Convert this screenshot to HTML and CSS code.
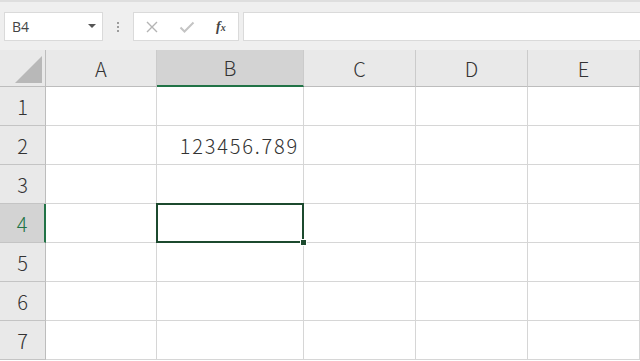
FILE: index.html
```html
<!DOCTYPE html>
<html lang="ja">
<head>
    <meta charset="UTF-8">
    <meta name="viewport" content="width=device-width, initial-scale=1.0">
    <title>Sheet</title>
    <link rel="stylesheet" href="styles.css">
</head>
<body>
    <div class="toolbar">
        <div class="namebox">
            <span>B4</span>
            <span class="caret"></span>
        </div>
        <div class="grip"><i></i><i></i><i></i></div>
        <div class="actions">
            <svg class="icon" width="14" height="14" viewBox="0 0 14 14">
                <path d="M2 2 L12 12 M12 2 L2 12" stroke="#b4b4b4" stroke-width="1.4" fill="none"/>
            </svg>
            <svg class="icon" width="16" height="14" viewBox="0 0 16 14">
                <path d="M1.5 7.5 L5.5 11.5 L14.5 2.5" stroke="#c4c4c4" stroke-width="2" fill="none"/>
            </svg>
            <span class="fx">f<sub>x</sub></span>
        </div>
        <div class="formula"></div>
    </div>

    <div class="sheet">
        <div class="corner"><span class="tri"></span></div>
        <div class="colhead">A</div>
        <div class="colhead active">B</div>
        <div class="colhead">C</div>
        <div class="colhead">D</div>
        <div class="colhead">E</div>

        <div class="rowhead">1</div>
        <div class="cell"></div><div class="cell"></div><div class="cell"></div><div class="cell"></div><div class="cell"></div>

        <div class="rowhead">2</div>
        <div class="cell"></div><div class="cell num">123456.789</div><div class="cell"></div><div class="cell"></div><div class="cell"></div>

        <div class="rowhead">3</div>
        <div class="cell"></div><div class="cell"></div><div class="cell"></div><div class="cell"></div><div class="cell"></div>

        <div class="rowhead active">4</div>
        <div class="cell"></div><div class="cell selected"><span class="handle"></span></div><div class="cell"></div><div class="cell"></div><div class="cell"></div>

        <div class="rowhead">5</div>
        <div class="cell"></div><div class="cell"></div><div class="cell"></div><div class="cell"></div><div class="cell"></div>

        <div class="rowhead">6</div>
        <div class="cell"></div><div class="cell"></div><div class="cell"></div><div class="cell"></div><div class="cell"></div>

        <div class="rowhead">7</div>
        <div class="cell"></div><div class="cell"></div><div class="cell"></div><div class="cell"></div><div class="cell"></div>
    </div>
</body>
</html>
```

FILE: styles.css
```css
body {
    margin: 0;
    width: 640px;
    height: 361px;
    overflow: hidden;
    background: #ffffff;
    font-family: "Noto Sans CJK JP", "Noto Sans", sans-serif;
    font-weight: 300;
    color: #333333;
}
.toolbar {
    height: 50px;
    box-sizing: border-box;
    background: #efefef;
    border-top: 2px solid #dedede;
    padding: 10px 0 0 4px;
    display: flex;
    align-items: flex-start;
}
.namebox {
    width: 99px;
    height: 29px;
    box-sizing: border-box;
    background: #ffffff;
    border: 1px solid #dadada;
    display: flex;
    align-items: center;
    justify-content: space-between;
    padding: 0 6px 0 7px;
    font-family: "Open Sans", sans-serif;
    font-weight: 400;
    font-size: 14px;
    color: #444444;
}
.caret {
    width: 0;
    height: 0;
    border-left: 4px solid transparent;
    border-right: 4px solid transparent;
    border-top: 4px solid #555555;
    margin-bottom: 2px;
}
.grip {
    width: 30px;
    height: 29px;
    display: flex;
    flex-direction: column;
    align-items: center;
    justify-content: center;
    gap: 2px;
}
.grip i {
    width: 2px;
    height: 2px;
    background: #9c9c9c;
}
.actions {
    width: 106px;
    height: 29px;
    box-sizing: border-box;
    background: #ffffff;
    border: 1px solid #dadada;
    display: flex;
    align-items: center;
    padding-left: 11px;
    gap: 20px;
}
.fx {
    font-family: "Liberation Serif", serif;
    font-style: italic;
    font-weight: bold;
    font-size: 14px;
    color: #444444;
    margin-left: 1px;
}
.fx sub {
    font-size: 10px;
    vertical-align: 0;
}
.formula {
    flex: 1;
    height: 29px;
    margin-left: 4px;
    background: #ffffff;
    border: 1px solid #dadada;
    border-right: none;
    box-sizing: border-box;
}
.sheet {
    display: grid;
    grid-template-columns: 46px 111px 147px 112px 112px 112px;
    grid-template-rows: 37px repeat(7, 39px);
    font-size: 20px;
}
.sheet > div {
    box-sizing: border-box;
    border-right: 1px solid #d6d6d6;
    border-bottom: 1px solid #d6d6d6;
}
.corner {
    background: #e9e9e9;
    position: relative;
    border-right-color: #bdbdbd !important;
    border-bottom-color: #bdbdbd !important;
}
.tri {
    position: absolute;
    right: 3px;
    bottom: 3px;
    width: 0;
    height: 0;
    border-left: 27px solid transparent;
    border-bottom: 27px solid #b8b8b8;
}
.colhead {
    background: #e9e9e9;
    display: flex;
    align-items: center;
    justify-content: center;
    border-right-color: #cbcbcb !important;
    border-bottom-color: #bdbdbd !important;
    color: #333333;
}
.colhead.active {
    background: #d3d3d3;
    border-bottom: 2px solid #217346 !important;
}
.rowhead {
    background: #e9e9e9;
    display: flex;
    align-items: center;
    justify-content: center;
    border-right-color: #bdbdbd !important;
    border-bottom-color: #c4c4c4 !important;
}
.rowhead.active {
    background: #d3d3d3;
    color: #217346;
    border-right: 2px solid #217346 !important;
}
.cell {
    background: #ffffff;
}
.num {
    display: flex;
    align-items: center;
    justify-content: flex-end;
    padding-right: 4px;
    letter-spacing: 1.8px;
}
.selected {
    position: relative;
}
.selected::before {
    content: "";
    position: absolute;
    left: -1px;
    top: -1px;
    right: -1px;
    bottom: -1px;
    border: 2px solid #1c4a2e;
}
.handle {
    position: absolute;
    right: -4px;
    bottom: -4px;
    width: 5px;
    height: 5px;
    background: #1c4a2e;
    border: 1px solid #ffffff;
    z-index: 2;
}
```
